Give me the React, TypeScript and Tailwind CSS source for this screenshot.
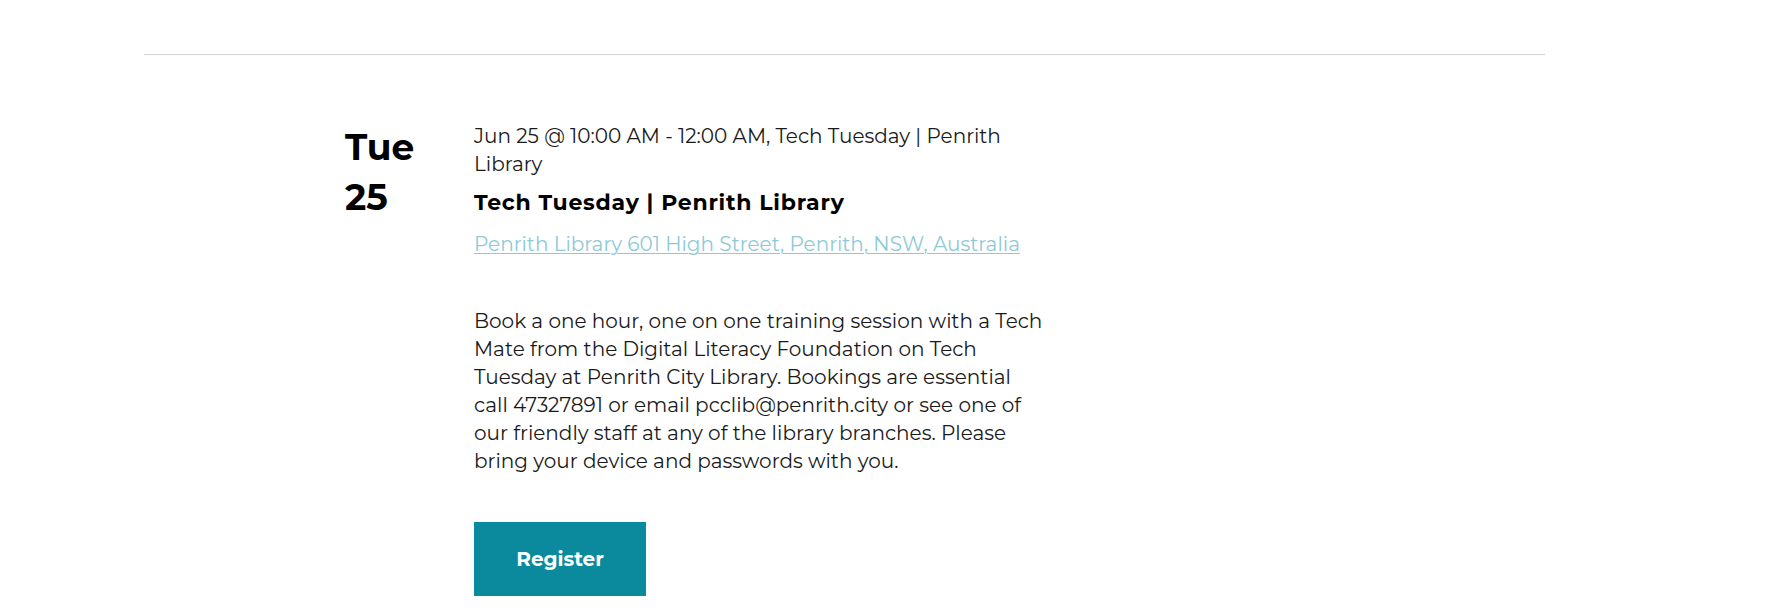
export default function App() {
  return (
    <div className="min-h-[615px] w-full bg-white text-[#1a1a1a] font-['Montserrat','Inter',sans-serif]">
      <div className="ml-[144px] w-[1401px] pt-[54px]">
        <div className="h-px bg-[#d3d3d3]" />

        <div className="flex pl-[201px] pt-[67px]">
          <div className="w-[129px] shrink-0 text-[36px] leading-[50px] font-bold text-black">
            <div>Tue</div>
            <div>25</div>
          </div>

          <div className="w-[574px] text-[20px] leading-[28px]">
            <p>Jun 25 @ 10:00 AM - 12:00 AM, Tech Tuesday | Penrith Library</p>
            <h3 className="mt-[11px] text-[22px] leading-[28px] font-bold text-black tracking-[0.035em]">
              Tech Tuesday | Penrith Library
            </h3>
            <a href="#" className="mt-[13px] block text-[#8ecad6] underline decoration-1 underline-offset-2">
              Penrith Library 601 High Street, Penrith, NSW, Australia
            </a>
            <p className="mt-[49px]">
              Book a one hour, one on one training session with a Tech Mate from the Digital Literacy
              Foundation on Tech Tuesday at Penrith City Library. Bookings are essential call 47327891
              or email pcclib@penrith.city or see one of our friendly staff at any of the library
              branches. Please bring your device and passwords with you.
            </p>
            <button className="mt-[47px] flex h-[74px] w-[172px] items-center justify-center bg-[#0a8a9c] text-[20px] font-bold text-white">
              Register
            </button>
          </div>
        </div>
      </div>
    </div>
  );
}
